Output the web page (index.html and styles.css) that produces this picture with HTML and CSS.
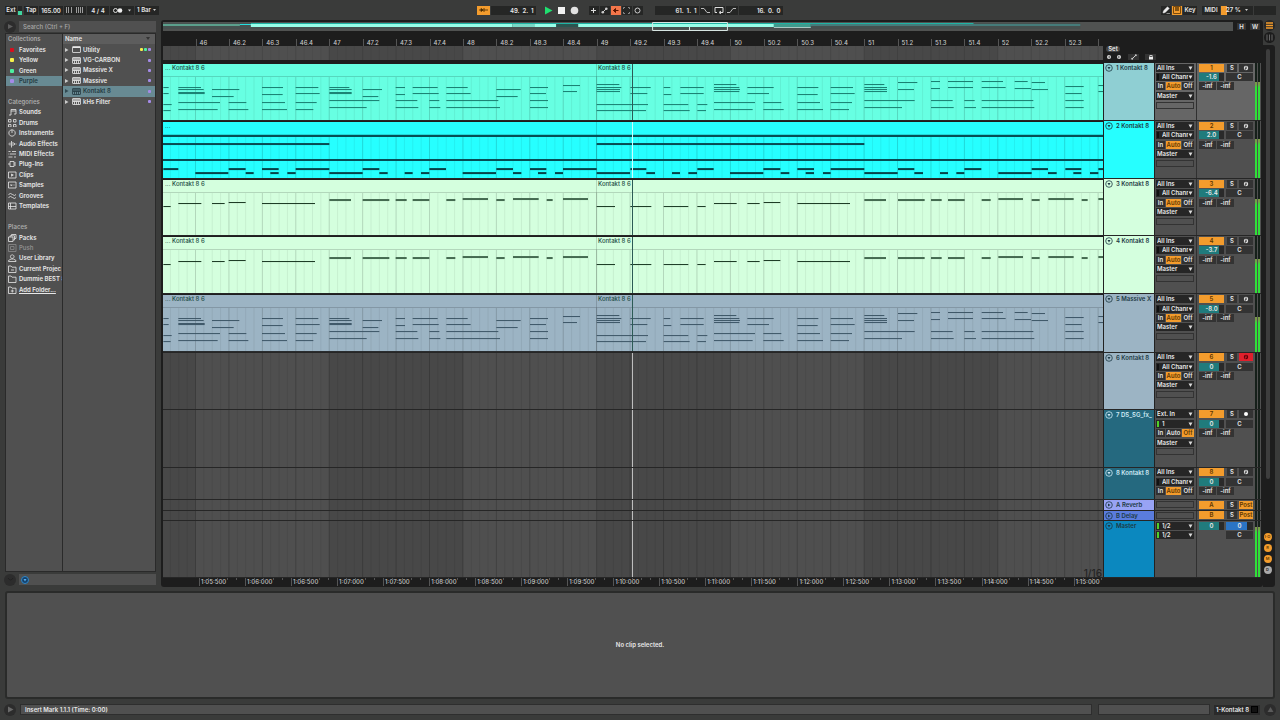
FILE: index.html
```html
<!DOCTYPE html>
<html lang="en">
<head>
<meta charset="utf-8">
<title>Arrangement</title>
<link rel="stylesheet" href="styles.css">
</head>
<body>
<header class="topbar">
  <div class="group">
    <button class="ctl w12">Ext</button><span class="led"></span>
    <button class="ctl w14">Tap</button>
    <input class="ctl w24" aria-label="Tempo" value="165.00">
    <button class="ctl w22" aria-label="Nudge"><svg width="18" height="6" viewBox="0 0 18 6"><path d="M.5 0v6M2.500 0v6M5.500 0v6M10.500 0v6M12.500 0v6M14.500 0v6M16.500 0v6" stroke="#bbb" stroke-width=".8"/></svg></button>
    <input class="ctl w22" aria-label="Time signature" value="4 / 4">
    <button class="ctl w24" aria-label="Metronome"><svg width="20" height="7" viewBox="0 0 20 7"><circle cx="3.500" cy="3.500" r="2" fill="none" stroke="#ddd"/><circle cx="8" cy="3.500" r="2.300" fill="#eee"/><path d="M16 2.500h3l-1.500 2z" fill="#ccc"/></svg></button>
    <button class="ctl w24">1 Bar <svg width="4" height="4" viewBox="0 0 4 4"><path d="M0 1h3L1.500 3z" fill="#ccc"/></svg></button>
  </div>
  <div class="group center">
    <button class="ctl w13 orange" aria-label="Follow"><svg width="9" height="6" viewBox="0 0 9 6"><path d="M0 3h9M5 1v4M2 1.500L4 3 2 4.500z" stroke="#4a2c00" fill="#4a2c00" stroke-width=".8"/></svg></button>
    <input class="ctl w45 pos" aria-label="Position" value="49.  2.  1">
    <button class="bare play" aria-label="Play"><svg width="9" height="9" viewBox="0 0 9 9"><path d="M1 0.500v8l7.500-4z" fill="#1fe070"/></svg></button>
    <button class="bare" aria-label="Stop"><svg width="9" height="9" viewBox="0 0 9 9"><rect x="1" y="1" width="7" height="7" fill="#f2f2f2"/></svg></button>
    <button class="bare" aria-label="Record"><svg width="9" height="9" viewBox="0 0 9 9"><circle cx="4.500" cy="4.500" r="3.800" fill="#e2e2e2"/></svg></button>
    <button class="ctl w9 gap-s" aria-label="Overdub"><svg width="7" height="7" viewBox="0 0 7 7"><path d="M3.500 1v5M1 3.500h5" stroke="#ddd"/></svg></button>
    <button class="ctl w9" aria-label="Automation arm"><svg width="7" height="7" viewBox="0 0 7 7"><path d="M1.500 5.500l4-4" stroke="#ccc"/><circle cx="1.800" cy="5.200" r="1.300" fill="#ccc"/><circle cx="5.300" cy="1.800" r="1.300" fill="#ccc"/></svg></button>
    <button class="ctl w9 coral" aria-label="Re-enable automation"><svg width="7" height="7" viewBox="0 0 7 7"><path d="M1 3.500h5.500M3.500 1.500L1.500 3.500l2 2z" stroke="#5c1500" fill="#5c1500"/></svg></button>
    <button class="ctl w9" aria-label="Capture"><svg width="7" height="7" viewBox="0 0 7 7"><path d="M.5 2V.5H2M5 .5h1.500V2M6.500 5v1.500H5M2 6.500H.5V5" fill="none" stroke="#888"/></svg></button>
    <button class="ctl w9" aria-label="Session record"><svg width="7" height="7" viewBox="0 0 7 7"><circle cx="3.500" cy="3.500" r="2.500" fill="none" stroke="#ccc"/></svg></button>
    <input class="ctl w44 pos gap-l" aria-label="Loop start" value="61.  1.  1">
    <button class="ctl w12" aria-label="Punch in"><svg width="9" height="7" viewBox="0 0 9 7"><path d="M0 1.500h3l3 4h3" fill="none" stroke="#bbb"/></svg></button>
    <button class="ctl w12" aria-label="Loop"><svg width="10" height="7" viewBox="0 0 10 7"><path d="M3 5.500H1v-5h8v5H6M7 4L5 5.500 7 7" fill="none" stroke="#ddd"/></svg></button>
    <button class="ctl w12" aria-label="Punch out"><svg width="9" height="7" viewBox="0 0 9 7"><path d="M0 5.500h3l3-4h3" fill="none" stroke="#bbb"/></svg></button>
    <input class="ctl w44 pos" aria-label="Loop length" value="16.  0.  0">
  </div>
  <div class="group right">
    <button class="ctl w9" aria-label="Draw"><svg width="8" height="8" viewBox="0 0 8 8"><path d="M1 7l.6-2.300L5.500.8l1.700 1.700-4 4zM4.500 7.500H8" fill="#eee" stroke="#eee" stroke-width=".5"/></svg></button>
    <button class="ctl w9 orange" aria-label="Keyboard"><svg width="8" height="8" viewBox="0 0 8 8"><path d="M.5.5h7v7h-7z" fill="none" stroke="#7a4a0c"/><path d="M3 1v4M5 1v4" stroke="#3d2500" stroke-width="1.200"/></svg></button>
    <button class="ctl w14">Key</button>
    <button class="ctl w18 gap-xs">MIDI</button>
    <span class="ctl w32 cpu">27 %<svg width="4" height="4" viewBox="0 0 4 4"><path d="M0 1h3L1.500 3z" fill="#ccc"/></svg></span>
    <span class="ctl w22"></span>
  </div>
</header>

<main class="workspace">
  <aside class="browser">
    <div class="search-row">
      <button class="round" aria-label="Toggle browser"><svg width="7" height="7" viewBox="0 0 7 7"><path d="M1 1v5l5-2.500z" fill="#5e5e5e"/></svg></button>
      <input class="search" aria-label="Search" placeholder="Search (Ctrl + F)">
    </div>
    <div class="browser-body">
      <nav class="places" id="places"></nav>
      <div class="results" id="results"></div>
    </div>
    <div class="search-row">
      <button class="round" aria-label="Preview"><svg width="7" height="7" viewBox="0 0 7 7"><path d="M1 2q2.500 4 5 0" fill="none" stroke="#222"/></svg></button>
      <div class="preview"><svg width="8" height="8" viewBox="0 0 8 8"><circle cx="4" cy="4" r="3.500" fill="#14406b" stroke="#2f86c8"/><path d="M2.500 3h3L4 5.500z" fill="#5cb0ee"/></svg></div>
    </div>
  </aside>

  <section class="arrangement">
    <div class="arr-main">
      <div class="overview-row">
        <svg class="overview" viewBox="0 0 1072 9" preserveAspectRatio="none">
          <rect width="1072" height="9" fill="#505251"/>
          <rect width="919" height="6" y="1" fill="#46504f"/>
          <rect width="77" height="2" y="2" fill="#5b9f8c"/>
          <rect x="77" width="12" height="1" y="2" fill="#24dfe0"/>
          <rect x="88" width="262" height="3" y="2" fill="#98ffe9"/>
          <rect x="88" width="724" height="1" y="1" fill="#1fb3a4"/>
          <rect x="350" width="22" height="3" y="2" fill="#78d8c6"/>
          <rect x="372" width="22" height="3" y="2" fill="#98ffe9"/>
          <rect x="394" width="22" height="3" y="2" fill="#2a5550"/>
          <rect x="416" width="196" height="3" y="2" fill="#98ffe9"/>
          <rect x="612" width="37" height="3" y="2" fill="#3f9a8d"/>
          <rect x="612" width="37" height="1" y="5" fill="#a8c8c3"/>
          <rect x="649" width="270" height="2" y="2" fill="#457b7a"/>
          <path d="M490.500 0.500h75v8h-75zM527.500 5v3" fill="none" stroke="#d8e6e3"/>
        </svg>
        <button class="hw">H</button><button class="hw">W</button>
      </div>
      <div class="ruler-row">
        <div class="ruler" id="ruler"></div>
      </div>
      <div class="scrub-row">
        <svg class="scrub" id="scrub" viewBox="0 0 940 14" preserveAspectRatio="none"></svg>
        <div class="locators">
          <button class="set">Set</button>
          <div class="loc-icons">
            <button class="bare" aria-label="Previous locator"><svg width="6" height="6" viewBox="0 0 6 6"><circle cx="3" cy="3" r="2" fill="#ddd"/><path d="M4 2L2.500 3 4 4" stroke="#222" fill="none" stroke-width=".6"/></svg></button>
            <button class="bare" aria-label="Next locator"><svg width="6" height="6" viewBox="0 0 6 6"><circle cx="3" cy="3" r="2" fill="#ddd"/><path d="M2 2l1.500 1L2 4" stroke="#222" fill="none" stroke-width=".6"/></svg></button>
            <button class="box" aria-label="Automation mode"><svg width="6" height="6" viewBox="0 0 6 6"><path d="M1 5l4-4" stroke="#ccc"/><circle cx="1.200" cy="4.800" r="1" fill="#ccc"/><circle cx="4.800" cy="1.200" r="1" fill="#ccc"/></svg></button>
            <button class="box" aria-label="Lock envelopes"><svg width="6" height="6" viewBox="0 0 6 6"><path d="M1 3h4v2.500H1z" fill="#eee"/><path d="M1.800 3V1.500h2.400V3" fill="none" stroke="#eee" stroke-width=".8"/></svg></button>
          </div>
        </div>
      </div>
      <div class="tracks" id="tracks"></div>
      <div class="ruler-row time"><div class="ruler" id="time"></div></div>
    </div>
    <div class="rail">
      <div class="rail-tabs">
        <button class="view" aria-label="Arrangement view"><svg width="11" height="11" viewBox="0 0 11 11"><circle cx="5.500" cy="5.500" r="5.500" fill="#272727"/><path d="M2 3h7M2 5.500h7M2 8h7" stroke="#f39c2d" stroke-width="1.400"/></svg></button>
        <button class="view" aria-label="Session view"><svg width="11" height="11" viewBox="0 0 11 11"><circle cx="5.500" cy="5.500" r="5.500" fill="#1c1c1c"/><path d="M3 2.500v6M5.500 2.500v6M8 2.500v6" stroke="#666"/></svg></button>
      </div>
      <div class="rail-body">
        <div class="scroll"></div>
        <div class="toggles">
          <button class="dot">I·O</button><button class="dot">R</button><button class="dot">M</button><button class="dot grey">D</button>
        </div>
      </div>
    </div>
  </section>
</main>

<section class="detail">No clip selected.</section>

<footer class="status">
  <button class="round" aria-label="Info view"><svg width="7" height="7" viewBox="0 0 7 7"><path d="M1 .5v6l5.500-3z" fill="#6a6a6a"/></svg></button>
  <div class="message">Insert Mark 1.1.1 (Time: 0:00)</div>
  <div class="clipinfo"></div>
  <button class="device">1-Kontakt 8 <span class="chip"></span></button>
  <button class="round" aria-label="Toggle detail"><svg width="7" height="7" viewBox="0 0 7 7"><path d="M3.500 1L6.500 6h-6z" fill="#5a5a5a"/></svg></button>
</footer>
<script src="script.js"></script>
</body>
</html>
```
FILE: styles.css
```css
* { box-sizing: border-box; }
body {
  margin: 0;
  height: 100vh;
  display: flex;
  flex-direction: column;
  background: #3a3b3a;
  color: #e8e8e8;
  font: 600 6px/8px Inter, "Liberation Sans", sans-serif;
  overflow: hidden;
}
button, input, select {
  font: inherit;
  color: inherit;
  border: 0;
  margin: 0;
  padding: 0;
  border-radius: 0;
  background: none;
  min-width: 0;
}
select { appearance: none; }
svg { display: block; flex: none; }

/* top bar */
.topbar {
  height: 20px;
  flex: none;
  padding: 0 4px 0 5px;
  display: grid;
  grid-template-columns: 1fr auto 1fr;
  align-items: center;
}
.group { display: flex; align-items: center; gap: 1px; }
.group.center { padding-right: 22px; }
.group.right { justify-content: flex-end; }
.ctl {
  height: 9px;
  background: #252625;
  display: flex;
  align-items: center;
  justify-content: center;
  gap: 2px;
  text-align: center;
}
.w9 { width: 10px; }
.w12 { width: 12px; }
.w13 { width: 13px; }
.w14 { width: 14px; }
.w18 { width: 18px; }
.w22 { width: 22px; }
.w24 { width: 24px; }
.w32 { width: 32px; }
.w44 { width: 44px; }
.w45 { width: 45px; }
.pos { white-space: pre; text-align: right; padding-right: 2px; }
.gap-xs { margin-left: 4px; }
.gap-s { margin-left: 7px; }
.gap-l { margin-left: 11px; }
.orange { background: #f39c2d; }
.coral { background: #f3764a; }
.bare { padding: 0 2px 0 1px; display: flex; align-items: center; }
.play { margin-left: 6px; }
.led { width: 4px; height: 9px; background: linear-gradient(#252625 5px, #3fd6a0 5px); }
.group > .led + .ctl { margin-left: 1px; }
.cpu {
  background: linear-gradient(90deg, #f39c2d 6px, #252625 6px);
  justify-content: space-between;
  padding: 0 4px 0 5px;
}

/* workspace */
.workspace { flex: 1; display: flex; gap: 5px; padding: 0 5px 0 4px; min-height: 0; }

.browser { width: 152px; flex: none; display: flex; flex-direction: column; }
.search-row { display: flex; height: 13px; gap: 3px; align-items: center; flex: none; }
.search-row:last-child { height: 15px; }
.round {
  width: 12px;
  height: 12px;
  flex: none;
  border-radius: 6px;
  background: #2c2c2c;
  display: flex;
  align-items: center;
  justify-content: center;
}
.search, .preview {
  flex: 1;
  height: 11px;
  background: #505050;
  padding: 0 4px;
  display: flex;
  align-items: center;
}
.preview { padding: 0 2px; }
.search { font-weight: 500; }
.search::placeholder { color: #a9a9a9; opacity: 1; }
.browser-body {
  flex: 1;
  display: flex;
  gap: 1px;
  margin-left: 1px;
  background: #2a2a2a;
  border: 1px solid #2a2a2a;
  min-height: 0;
}
.places, .results { background: #505050; overflow: hidden; }
.places { width: 56px; flex: none; }
.results { flex: 1; }
.list { display: flex; flex-direction: column; }
.places .list { height: 261px; }
.results .list { height: 73px; }
.item {
  flex: 1;
  display: flex;
  align-items: center;
  gap: 2px;
  padding-left: 2px;
  color: #e8e8e8;
  white-space: nowrap;
  width: 100%;
  min-height: 0;
}
.item.head { color: #aaa; }
.item.dim { color: #8c8c8c; }
.item.sel { background: #688a93; color: #243a42; }
.item.link span { text-decoration: underline; }
.item.name { background: #5d5d5d; justify-content: space-between; padding-right: 4px; }
.results .item { padding-right: 4px; }
.dots { display: flex; gap: 1px; margin-left: auto; }
.dots i { width: 3px; height: 3px; border-radius: 1px; }

/* arrangement */
.arrangement { flex: 1; display: flex; min-width: 0; }
.arr-main {
  flex: 1;
  min-width: 0;
  display: flex;
  flex-direction: column;
  background: #1d1d1d;
  padding: 0 2px;
  border-radius: 3px;
}
.overview-row { height: 12px; display: flex; align-items: center; gap: 4px; padding-right: 1px; }
.overview { flex: 1; height: 9px; min-width: 0; }
.hw { width: 9px; height: 7px; background: #333; line-height: 7px; }
.hw:last-child { width: 10px; }
.ruler-row { height: 14px; padding-right: 158px; flex: none; }
.ruler { position: relative; height: 100%; overflow: hidden; }
.tick {
  position: absolute;
  bottom: 0;
  height: 7px;
  padding-left: 3px;
  border-left: 1px solid #555;
  white-space: nowrap;
  color: #c8c8c8;
  font-weight: 500;
}
.tick.small { height: 1px; padding: 0; }
.ruler-row.time { height: 9px; }
.time .tick { top: 0; bottom: auto; height: 8px; padding-left: 1px; }
.time .tick.small { height: 2px; }
.scrub-row { height: 17px; display: flex; flex: none; }
.scrub { flex: 1; height: 14px; min-width: 0; }
.locators { width: 158px; padding-left: 3px; }
.set { display: block; width: 14px; height: 6px; line-height: 6px; border-radius: 3px; background: #444; }
.loc-icons { display: flex; align-items: center; gap: 4px; height: 9px; }
.loc-icons .bare { padding: 0; }
.box { width: 11px; height: 6px; background: #333; display: flex; align-items: center; justify-content: center; margin-left: 2px; }

.tracks {
  flex: 1;
  min-height: 0;
  display: grid;
  grid-template-rows: 58fr 58fr 57fr 58fr 58fr 57fr 58fr 32fr 11fr 10fr 57fr;
  position: relative;
}
.track {
  min-height: 0;
  overflow: hidden;
  display: grid;
  grid-template-columns: minmax(0, 1fr) 52px 42px 58px 6px;
  border-bottom: 1px solid #262626;
}
.lane { position: relative; min-height: 0; overflow: hidden; }
.filled .lane { border-top: 1px solid #22222244; }
.lane svg { position: absolute; inset: 0; width: 100%; height: 100%; }
.clip-name { position: absolute; top: 0; color: #1c4a44; font-weight: 500; }
.title {
  border-left: 1px solid #222;
  border-right: 1px solid #222;
  display: flex;
  align-items: flex-start;
  gap: 3px;
  padding: 1px 0 0 1px;
  white-space: nowrap;
  overflow: hidden;
  color: #1d3a44;
}
.title svg { width: 8px; height: 8px; }
.title.light { color: #cfeaf5; }
.io, .mix { background: #505050; overflow: hidden; min-height: 0; }
.io { border-right: 1px solid #303030; padding: 0 2px 0 1px; }
.mix { padding: 0 2px; }
.picked .io, .picked .mix { background: #666; }
.stack {
  height: 47px;
  display: grid;
  grid-template-rows: repeat(5, 1fr);
  grid-template-columns: minmax(0, 1fr);
}
.line { display: flex; align-items: center; gap: 2px; min-height: 0; min-width: 0; }
.track > div > .line { height: 100%; }
.sel-box { position: relative; flex: 1; height: 8px; background: #262626; min-width: 0; display: flex; }
.sel-box select { flex: 1; width: 0; height: 8px; padding-left: 1px; margin-right: 6px; overflow: hidden; text-overflow: clip; }
.sel-box.indent::before { content: ""; width: 2px; background: #111; margin: 1px 0 1px 1px; }
.sel-box.indent select { padding-left: 3px; }
.sel-box.lit::before { background: #4fd02a; }
.sel-box svg { position: absolute; right: 1px; top: 2px; pointer-events: none; }
.blank { flex: 1; height: 7px; border: 1px solid #333; }
.seg { flex: 1; height: 8px; background: #303030; line-height: 8px; text-align: center; }
.io .line { gap: 1px; }
.seg.first-seg { flex: 0 0 9px; }
.seg.auto { flex: 0 0 15px; }
.seg.on { background: #f39c2d; color: #5e3600; }
.act { width: 25px; height: 8px; background: #f39c2d; color: #5e3600; line-height: 8px; }
.solo { width: 10px; height: 8px; background: #333; line-height: 8px; margin-left: 1px; }
.arm { flex: 1; height: 8px; background: #333; display: flex; align-items: center; justify-content: center; }
.arm.hot { background: #e0202c; }
.post { flex: 1; height: 8px; background: #f39c2d; color: #5e3600; line-height: 8px; }
.val { width: 25px; height: 8px; text-align: center; background: linear-gradient(90deg, #207b7c 20px, #2a2a2a 20px); }
.val.cue { flex: 1; background: linear-gradient(90deg, #2b74c4 21px, #2a2a2a 21px); }
.val.none { background: none; }
.pan { flex: 1; width: 0; height: 8px; text-align: center; background: #333; }
.inf { width: 17px; height: 8px; background: #333; text-align: center; }
.inf + .inf { margin-left: -1px; }
.meter { background: #505050; padding-right: 1px; display: flex; gap: 1px; }
.meter i { flex: 1; background: linear-gradient(#16201a var(--top), #789c48 var(--top), #789c48 calc(var(--top) + 4%), #2fe038 calc(var(--top) + 10%)); }
.grid-value { position: absolute; right: 159px; bottom: 0; font-size: 10px; line-height: 10px; font-weight: 500; color: #242424; }

.rail { width: 12px; display: flex; flex-direction: column; flex: none; }
.rail-tabs { height: 25px; display: flex; flex-direction: column; gap: 1px; }
.view { width: 12px; height: 11px; padding-left: 1px; }
.rail-body {
  flex: 1;
  display: flex;
  flex-direction: column;
  justify-content: space-between;
  align-items: center;
  background: #1d1d1d;
  border-radius: 0 3px 3px 0;
  padding: 4px 3px 13px 0;
}
.scroll { width: 4px; height: 430px; border-radius: 2px; background: #3d3d3d; }
.toggles { display: flex; flex-direction: column; gap: 3px; }
.dot { width: 8px; height: 8px; border-radius: 4px; background: #f39c2d; color: #5e3600; font-size: 4px; line-height: 8px; }
.dot.grey { background: #aaa; color: #222; }

/* detail and status */
.detail {
  flex: none;
  height: 108px;
  margin: 4px 5px 0;
  border: 2px solid #2a2b2a;
  border-radius: 3px;
  background: #505050;
  display: flex;
  align-items: center;
  justify-content: center;
}
.status { height: 21px; flex: none; display: flex; align-items: center; gap: 4px; padding: 0 4px; }
.message, .clipinfo { height: 11px; background: #505050; border: 1px solid #2e2e2e; padding: 0 4px; line-height: 9px; }
.message { flex: 1; margin-right: 2px; }
.clipinfo { width: 112px; }
.device { display: flex; align-items: center; gap: 2px; height: 10px; padding: 0 2px; background: #2a2a2a; }
.chip { width: 7px; height: 7px; background: #111; border: 1px solid #000; }
```
FILE: script.js
```js
// Sidebar ------------------------------------------------------------
const ICONS = {
  sounds: 'M3 7V1.500h5V6M3 3h5M1 7h2M6 6h2',
  drums: 'M.5.5h2.500v2.500H.5zM5.500.5h2.500v2.500H5.500zM.5 5.500h2.500v2.500H.5zM5.500 5.500h2.500v2.500H5.500z',
  instruments: 'M4 .8a3.200 3.200 0 1 0 .1 0M4 .8V4',
  audio: 'M.5 4h1M2 2.500v3M3.500 1v6.500M5 2v4M6.500 3v2M7.500 4h1',
  midi: 'M.5 1.500h2M4 1.500h4M2 4h6M.5 7h4M6 7h2M.5 4h.8',
  plug: 'M2 1.500h4v5H2zM0 4h2M6 3h2M6 5h2',
  clips: 'M.5 1h7.500v6H.5zM3.500 3v2.200L5.300 4z',
  samples: 'M.5 1h7.500v6H.5zM2 4h1M3.500 3.500v1.500M5 3.500v1M6.500 4h.5',
  grooves: 'M.5 2.500q2-2 4 0t3.500 0M.5 5.500q2-2 4 0t3.500 0',
  templates: 'M.5 1h7.500v6H.5zM.5 4.500H8M2.500 1v6',
  packs: 'M.5 3h4.500v4.500H.5zM2 3V1.800h4.500V6H5M3.500 1.800V.5H8v4H6.500',
  push: 'M.5.5h7.500v7H.5zM2.500 2.500h3.500v3H2.500z',
  user: 'M4.200.8a1.800 1.800 0 1 0 .1 0M.5 7.500V6.500l2.500-1.500h2.500L8 6.500v1z',
  project: 'M.5 1h2.500l1 1.200h4V7.500H.5zM3 5h3',
  folder: 'M.5 1h2.500l1 1.200h4V7.500H.5z',
  add: 'M.5 1h2.500l1 1.200h4V7.500H.5zM4.300 3.500v3M2.800 5h3'
};
const icon = name => `<svg width="9" height="8" viewBox="0 0 9 8"><path d="${ICONS[name]}" fill="none" stroke="currentColor" stroke-width=".8"/></svg>`;
const swatch = c => `<svg width="9" height="8" viewBox="0 0 9 8"><rect x="2" y="2" width="4" height="4" rx="1" fill="${c}"/></svg>`;

const places = [
  ['head', '', 'Collections'],
  ['', swatch('#d80f1e'), 'Favorites'], ['', swatch('#f6f04a'), 'Yellow'],
  ['', swatch('#4df0a0'), 'Green'], ['sel', swatch('#a58be8'), 'Purple'],
  null, ['head', '', 'Categories'],
  ['', icon('sounds'), 'Sounds'], ['', icon('drums'), 'Drums'], ['', icon('instruments'), 'Instruments'],
  ['', icon('audio'), 'Audio Effects'], ['', icon('midi'), 'MIDI Effects'], ['', icon('plug'), 'Plug-Ins'],
  ['', icon('clips'), 'Clips'], ['', icon('samples'), 'Samples'], ['', icon('grooves'), 'Grooves'],
  ['', icon('templates'), 'Templates'],
  null, ['head', '', 'Places'],
  ['', icon('packs'), 'Packs'], ['dim', icon('push'), 'Push'], ['', icon('user'), 'User Library'],
  ['', icon('project'), 'Current Projec'], ['', icon('folder'), 'Dummie BEST 8'], ['link', icon('add'), 'Add Folder...']
];
document.getElementById('places').innerHTML = '<div class="list">' + places.map(p => {
  if (!p) return '<div class="item"></div>';
  const tag = p[0] === 'head' ? 'div' : 'button';
  return `<${tag} class="item ${p[0]}">${p[1]}<span>${p[2]}</span></${tag}>`;
}).join('') + '</div>';

const arrow = '<svg width="5" height="6" viewBox="0 0 5 6"><path d="M0 1v4l3.500-2z" fill="currentColor" opacity=".8"/></svg>';
const device = keys => `<svg width="9" height="7" viewBox="0 0 9 7"><rect x=".5" y=".5" width="8" height="6" rx=".5" fill="none" stroke="currentColor" stroke-width=".8"/>${keys ? '<path d="M1 1h7v2.500H1z" fill="currentColor" opacity=".6"/><path d="M2.500 3.500v3M4.500 3.500v3M6.500 3.500v3M1 3.500h7" fill="none" stroke="currentColor" stroke-width=".8"/>' : '<path d="M1 1.500h7" stroke="currentColor"/>'}</svg>`;
const devices = ['Utility', 'VG-CARBON', 'Massive X', 'Massive', 'Kontakt 8', 'kHs Filter'];
document.getElementById('results').innerHTML = '<div class="list"><div class="item name">Name<svg width="5" height="4" viewBox="0 0 5 4"><path d="M0 0h4L2 3z" fill="#333"/></svg></div>' +
  devices.map((d, i) => `<button class="item ${i === 4 ? 'sel' : ''}">${arrow}${device(i > 0)}<span>${d}</span><span class="dots">${i ? '' : '<i style="background:#f6f04a"></i><i style="background:#4df0a0"></i>'}<i style="background:#a58be8"></i></span></button>`).join('') + '</div>';

// Timeline -----------------------------------------------------------
const WIDTH = 940, START = 32.5, BEAT = 33.43, PLAYHEAD = 469.5;
const pct = x => (x / WIDTH * 100) + '%';
let html = '';
for (let i = 0; i < 28; i++) {
  const bar = 46 + Math.floor(i / 4), beat = i % 4;
  html += `<span class="tick" style="left:${pct(START + i * BEAT)}">${i === 27 ? '' : beat ? bar + '.' + (beat + 1) : bar}</span>`;
}
document.getElementById('ruler').innerHTML = html;
html = '';
for (let i = 0; i < 20; i++) {
  const half = 11 + i, x = 36 + i * 46.03;
  html += `<span class="tick" style="left:${pct(x)}">1:${String(Math.floor(half / 2)).padStart(2, '0')}:${half % 2 ? '500' : '000'}</span>`;
  for (let k = 1; k < 5; k++) html += `<span class="tick small" style="left:${pct(x + k * 9.2)}"></span>`;
}
document.getElementById('time').innerHTML = html;

function shade(h) {
  let s = `<rect width="${WIDTH}" height="${h}" fill="#484848"/>`;
  for (let b = 0; b < 7; b += 2) s += `<rect x="${START + b * 4 * BEAT}" width="${4 * BEAT}" height="${h}" fill="#4f4f4f"/>`;
  return s;
}
function gridLines(y, h, minor, major) {
  let a = '', b = '';
  for (let k = -3; k < 109; k++) {
    const x = START + k * BEAT / 4;
    if (k % 4) a += `M${x} ${y}V${h}`; else b += `M${x} ${y}V${h}`;
  }
  return `<path d="${a}" stroke="${minor}"/><path d="${b}" stroke="${major}"/>`;
}
document.getElementById('scrub').innerHTML = shade(14) + gridLines(0, 14, '#0000000c', '#0000001c');

// Notes are [start, end, pitch row] in thirds of a pixel.
const CHORDS = `10,26,82 10,26,100 10,35,133 10,32,151 55,123,82 55,131,88 55,134,96 55,134,99 55,180,127 55,173,148 156,238,88 156,221,107
206,259,127 206,265,148 306,369,82 306,368,103 306,375,127 306,381,148 407,475,82 407,479,100 407,470,127 407,460,148
508,568,82 508,575,88 508,575,96 508,575,99 508,658,121 508,620,142 608,666,88 608,655,107 707,735,82 707,735,103 707,772,121 707,775,142
758,833,82 758,836,100 808,838,121 808,841,142 859,923,82 859,932,100 859,1015,121 859,1020,140
1009,1082,88 1009,1073,107 1110,1164,82 1110,1158,100 1110,1164,121 1110,1164,141 1209,1260,74 1209,1251,94
1310,1378,73 1310,1384,82 1310,1380,88 1310,1380,94 1310,1464,133 1310,1458,151 1411,1472,82 1411,1462,100 1511,1531,82 1511,1534,103
1511,1585,133 1511,1589,151 1561,1631,82 1561,1631,100 1612,1642,133 1612,1638,151 1662,1729,73 1662,1738,82 1662,1740,88 1662,1738,94
1662,1785,127 1662,1778,148 1762,1841,82 1762,1827,100 1810,1864,127 1810,1871,148 1912,1975,82 1912,1973,103 1912,1980,127 1912,1989,148
2012,2079,82 2012,2084,100 2012,2076,127 2012,2067,148 2113,2173,73 2113,2181,82 2113,2181,88 2113,2181,94 2113,2264,121 2113,2226,142
2214,2272,67 2214,2262,88 2313,2340,64 2313,2340,85 2313,2378,121 2313,2381,142 2364,2439,64 2364,2439,82 2413,2444,121 2413,2448,142
2465,2529,64 2465,2537,82 2465,2620,121 2465,2623,140 2564,2603,64 2564,2613,85 2615,2655,67 2615,2664,88
2716,2771,79 2716,2765,100 2716,2771,121 2716,2771,140 2815,2830,74 2815,2830,94`;
const MELODY = `10,32,84 55,124,74 156,194,74 206,257,71 306,465,74 508,573,64 608,688,64 707,740,64 758,808,64 859,886,64 908,984,61
1009,1034,64 1059,1136,61 1160,1178,64 1209,1284,61 1310,1365,84 1411,1474,84 1511,1585,84 1612,1637,84 1662,1730,74 1762,1799,74 1811,1861,71
1912,2070,74 2113,2178,64 2214,2294,64 2313,2345,64 2364,2414,64 2465,2492,64 2515,2589,61 2615,2639,64 2665,2741,61 2765,2783,64 2815,2830,61`;
const HIGH = '10,55 206,257 306,356 407,508 608,658 808,858 1009,1059 1110,1159 1209,1310 1411,1459 1612,1661 1810,1861 1912,1962 2012,2113 2214,2263 2413,2464 2615,2664 2716,2764 2815,2830';
const LOW = '106,205 257,281 331,356 382,407 508,608 658,683 734,758 783,808 908,1008 1059,1084 1134,1159 1185,1209 1310,1410 1459,1485 1536,1560 1585,1611 1710,1810 1862,1888 1937,1962 1989,2012 2113,2213 2263,2289 2340,2364 2389,2413 2515,2615 2664,2690 2740,2764 2790,2815';
const parse = s => s.split(/\s+/).map(n => n.split(',').map(Number));
const note = (a, b, y, w, c) => `<rect x="${a / 3 - 3}" y="${y}" width="${(b - a) / 3}" height="${w}" fill="${c}"/>`;

function laneArt(t) {
  if (!t.clip) return shade(t.h) + gridLines(0, t.h, '#00000012', '#00000030') + `<path d="M${PLAYHEAD} 0V${t.h}" stroke="#bdbdbd"/>`;
  let s = `<rect width="${WIDTH}" height="${t.h}" fill="${t.clip}"/><path d="M0 12.500H${WIDTH}" stroke="#00000028"/>` +
    gridLines(13, t.h, '#00000010', '#00000028') + `<path d="M433.500 0V${t.h}" stroke="#00000028"/>`;
  if (t.kind === 'chords') parse(CHORDS).forEach(n => s += note(n[0], n[1], Math.round(n[2] / 3 - 4), 1, t.ink));
  if (t.kind === 'melody') parse(MELODY).forEach(n => s += note(n[0], n[1], Math.round(n[2] / 3 - 2 + t.shift), n[2] > 70 ? 1 : 2, n[2] > 70 ? '#16351f' : '#446a50'));
  if (t.kind === 'bass') {
    s += `<path d="M0 14H${WIDTH}" stroke="#064e55" stroke-width="2"/><path d="M0 38H${WIDTH}" stroke="#064e55" stroke-width="2"/>`;
    s += note(9, 508, 21, 2, '#084a52') + note(1310, 2113, 21, 2, '#084a52');
    parse(HIGH).forEach(n => s += note(n[0], n[1], 46, 2, '#064248'));
    parse(LOW).forEach(n => s += note(n[0], n[1], 50, 2, '#064248'));
  }
  return s + `<path d="M${PLAYHEAD} 0V${t.h}" stroke="${t.kind === 'bass' ? '#c8ffff' : '#2c5a55'}"/>`;
}

// Tracks -------------------------------------------------------------
const DOWN = '<path d="M2.500 3h3L4 5.500z" fill="currentColor"/>', RIGHT = '<path d="M3 2.500v3L5.500 4z" fill="currentColor"/>';
const tracks = [
  { name: '1 Kontakt 8', n: '1', bg: '#8fcfd3', clip: '#67ffe2', ink: '#187d6f', kind: 'chords', vol: '-1.6', h: 56, top: '33%', picked: 1 },
  { name: '2 Kontakt 8', n: '2', bg: '#26ffff', clip: '#26ffff', kind: 'bass', vol: '2.0', h: 56, top: '32%', noName: 1 },
  { name: '3 Kontakt 8', n: '3', bg: '#d4ffde', clip: '#d4ffde', kind: 'melody', shift: 0, vol: '-6.4', h: 55, top: '36%' },
  { name: '4 Kontakt 8', n: '4', bg: '#d4ffde', clip: '#d4ffde', kind: 'melody', shift: 1, vol: '-3.7', h: 56, top: '40%' },
  { name: '5 Massive X', n: '5', bg: '#9cb4c4', clip: '#9cb4c4', ink: '#3c5566', kind: 'chords', vol: '-8.0', h: 56, top: '40%' },
  { name: '6 Kontakt 8', n: '6', bg: '#9cb4c4', vol: '0', h: 56, hot: 1 },
  { name: '7 DS_SG_fx_', n: '7', bg: '#25697f', light: 1, vol: '0', h: 57, audio: 1 },
  { name: '8 Kontakt 8', n: '8', bg: '#25697f', light: 1, vol: '0', h: 31, short: 1 },
  { name: 'A Reverb', n: 'A', bg: '#98a3f5', h: 10, ret: 1 },
  { name: 'B Delay', n: 'B', bg: '#5a7cdd', h: 9, ret: 1 },
  { name: 'Master', n: '', bg: '#0b88bf', h: 56, master: 1, top: '10%' }
];
const pick = (v, label, cls = '') => `<span class="sel-box ${cls}"><select aria-label="${label}"><option>${v}</option></select><svg width="5" height="5" viewBox="0 0 5 5"><path d="M.5.5h4l-2 3.500z" fill="#ddd"/></svg></span>`;
const line = s => `<div class="line">${s}</div>`;

function ioPart(t) {
  if (t.ret) return line('<span class="blank"></span>');
  if (t.master) return `<div class="stack">${line(pick('1/2', 'Cue out', 'indent lit'))}${line(pick('1/2', 'Master out', 'indent lit'))}</div>`;
  const on = t.audio ? 2 : 1;
  return `<div class="stack">${line(pick(t.audio ? 'Ext. In' : 'All Ins', 'Input'))}${line(pick(t.audio ? '1' : 'All Channels', 'Channel', 'indent' + (t.audio ? ' lit' : '')))}${
    line(['In', 'Auto', 'Off'].map((x, i) => `<button class="seg ${['first-seg', 'auto', ''][i]} ${i === on ? 'on' : ''}">${x}</button>`).join(''))}${
    t.short ? '' : line(pick('Master', 'Output')) + line('<span class="blank"></span>')}</div>`;
}
function mixPart(t) {
  const value = (v, c = '') => `<input class="val ${c}" aria-label="Volume" value="${v}">`;
  if (t.ret) return line(`<button class="act">${t.n}</button><button class="solo">S</button><button class="post">Post</button>`);
  if (t.master) return `<div class="stack">${line(value('0') + value('0', 'cue'))}${line('<span class="val none"></span><input class="pan" aria-label="Pan" value="C">')}</div>`;
  const dot = t.audio ? '<circle cx="3" cy="3" r="2" fill="#fff"/>' : `<circle cx="3" cy="3" r="2.200" fill="${t.hot ? '#5c0008' : '#e0e0e0'}"/><path d="M3 1.500v2.500H1.800" stroke="${t.hot ? '#e0202c' : '#222'}" fill="none"/>`;
  return `<div class="stack">${line(`<button class="act">${t.n}</button><button class="solo">S</button><button class="arm ${t.hot ? 'hot' : ''}" aria-label="Arm"><svg width="6" height="6" viewBox="0 0 6 6">${dot}</svg></button>`)}${
    line(value(t.vol) + '<input class="pan" aria-label="Pan" value="C">')}${line('<span class="inf">-inf</span><span class="inf">-inf</span>')}</div>`;
}
document.getElementById('tracks').innerHTML = tracks.map(t => `<div class="track ${t.picked ? 'picked' : ''} ${t.clip ? 'filled' : ''}">
<div class="lane"><svg viewBox="0 0 ${WIDTH} ${t.h}" preserveAspectRatio="none">${laneArt(t)}</svg>${
  t.clip ? `<span class="clip-name" style="left:${pct(2)}">${t.noName ? '...' : '... Kontakt 8 6'}</span>` + (t.noName ? '' : `<span class="clip-name" style="left:${pct(435)}">Kontakt 8 6</span>`) : ''}</div>
<div class="title ${t.light ? 'light' : ''}" style="background:${t.bg}"><svg viewBox="0 0 8 8"><circle cx="4" cy="4" r="3.300" fill="none" stroke="currentColor" stroke-width=".8"/>${t.ret ? RIGHT : DOWN}</svg><span>${t.name}</span></div>
<div class="io">${ioPart(t)}</div><div class="mix">${mixPart(t)}</div>
<div class="meter" style="--top:${t.top || '110%'}"><i></i><i></i></div></div>`).join('') + '<span class="grid-value">1/16</span>';
```
